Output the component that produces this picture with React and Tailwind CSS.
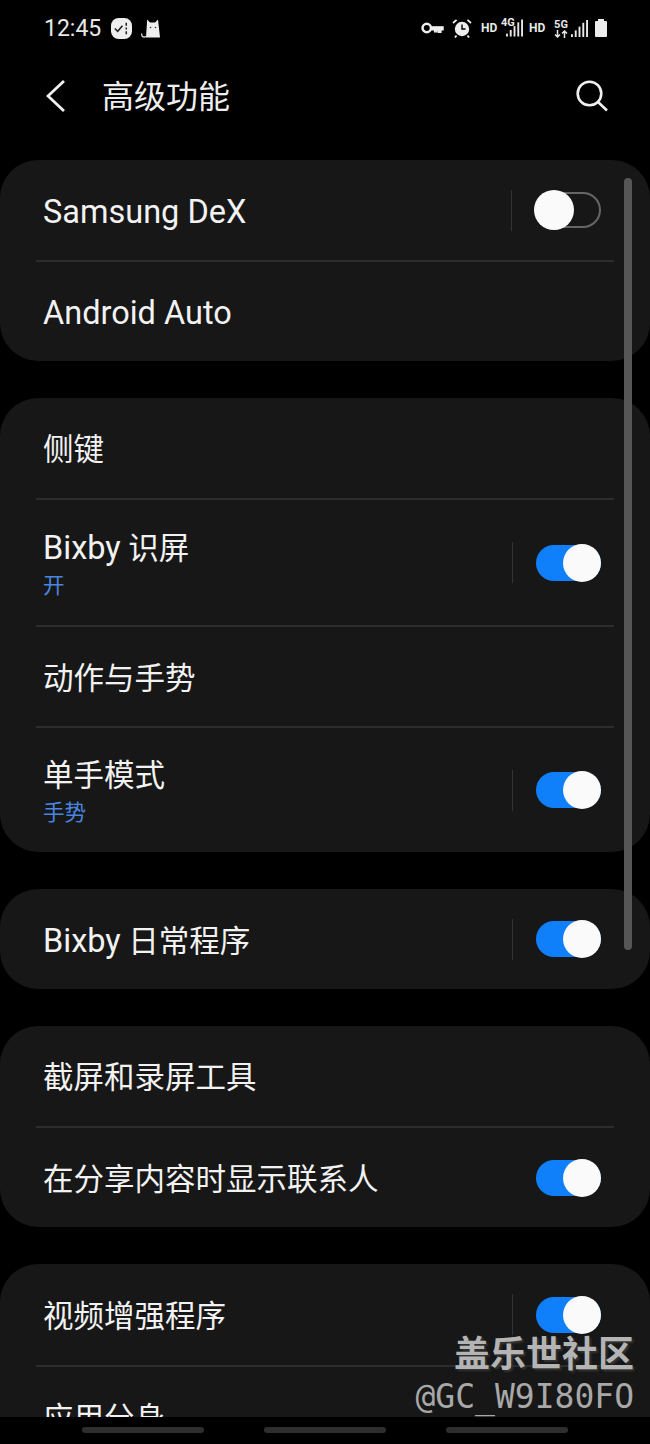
import React from 'react';

const cjk = "font-['Roboto','Noto_Sans_CJK_SC',sans-serif]";

const Signal = ({ className }) => (
  <svg viewBox="0 0 18 18" className={className} fill="#e8e8e8">
    <rect x="0" y="15" width="2" height="3" />
    <rect x="4" y="11" width="2" height="7" />
    <rect x="8" y="7" width="2" height="11" />
    <rect x="12" y="3" width="2" height="15" />
    <rect x="16" y="0" width="2" height="18" />
  </svg>
);

const StatusIcons = () => (
  <div className="flex items-center text-[#e8e8e8]">
    {/* key */}
    <svg viewBox="0 0 24 14" className="w-[23px] h-[14px]" fill="none" stroke="#eee">
      <circle cx="6" cy="7" r="4.4" strokeWidth="2.6" />
      <path d="M10.5 5.8H23v3h-2.2v2.8h-2.6V8.8h-1.6v2.2h-2.4V8.8h-3.6" strokeWidth="1.4" fill="#eee" />
    </svg>
    {/* alarm */}
    <svg viewBox="0 0 20 20" className="w-[20px] h-[20px] ml-[8px]">
      <circle cx="10" cy="11" r="7.2" fill="#eee" />
      <path d="M10 6.5V11h3.5" stroke="#000" strokeWidth="1.4" fill="none" />
      <path d="M1 5l3.6-3.2M19 5l-3.6-3.2M4.5 17.5L3 19.5M15.5 17.5L17 19.5" stroke="#eee" strokeWidth="1.8" />
    </svg>
    <span className="ml-[9px] w-[16px] text-[12px] font-bold leading-none font-['Roboto',sans-serif]">HD</span>
    <div className="relative ml-[4px] w-[22px] h-[18px]">
      <span className="absolute left-0 top-[-2px] text-[11px] font-bold leading-none font-['Roboto',sans-serif]">4G</span>
      <Signal className="absolute right-0 top-0 w-[17px] h-[18px]" />
    </div>
    <span className="ml-[6px] w-[16px] text-[12px] font-bold leading-none font-['Roboto',sans-serif]">HD</span>
    <div className="ml-[9px] flex flex-col items-center w-[14px]">
      <span className="text-[11px] font-bold leading-[11px] font-['Roboto',sans-serif]">5G</span>
      <svg viewBox="0 0 14 8" className="w-[14px] h-[8px]" fill="none" stroke="#e8e8e8" strokeWidth="1.5">
        <path d="M3.5 0v7M1 4.5l2.5 2.5L6 4.5M10.5 8V1M8 3.5L10.5 1 13 3.5" />
      </svg>
    </div>
    <Signal className="ml-[3px] w-[17px] h-[17px]" />
    <div className="ml-[7px] flex flex-col items-center">
      <div className="w-[6px] h-[2px] bg-[#eee]" />
      <div className="w-[12px] h-[16px] bg-[#eee] rounded-[1px]" />
    </div>
  </div>
);

const Toggle = ({ on, divider = true }) => (
  <div className="flex items-center shrink-0">
    {divider && <div className="w-px h-[41px] bg-[#333] mr-[23px]" />}
    {on ? (
      <div className="relative w-[65px] h-[36px] rounded-full bg-[#0f80fa]">
        <div className="absolute right-0 top-[-1px] w-[38px] h-[38px] rounded-full bg-[#fafafa]" />
      </div>
    ) : (
      <div className="relative w-[66px] h-[36px] rounded-full border-2 border-[#666]">
        <div className="absolute left-[-3px] top-[-4px] w-[40px] h-[40px] rounded-full bg-[#fafafa]" />
      </div>
    )}
  </div>
);

const Row = ({ title, sub, toggle, divider, last, className }) => (
  <div className={`mx-[36px] pl-[7px] pr-[13px] flex items-center justify-between ${last ? '' : 'border-b-2 border-[#2d2d2d]'} ${className}`}>
    <div className={sub ? 'pt-[2px]' : 'pt-[4px]'}>
      <div className="text-[30.5px] leading-[38px] text-[#f2f2f2]">{title}</div>
      {sub && <div className="text-[21.5px] leading-[26px] text-[#4a86e0] mt-[5px]">{sub}</div>}
    </div>
    {toggle !== undefined && <Toggle on={toggle} divider={divider} />}
  </div>
);

const Latin = ({ children }) => <span className="text-[32.5px]">{children}</span>;

const Card = ({ children }) => (
  <div className="bg-[#171717] rounded-[38px]">{children}</div>
);

export default function App() {
  return (
    <div className={`relative w-[650px] h-[1444px] bg-black overflow-hidden ${cjk}`}>
      {/* status bar */}
      <div className="h-[56px] pl-[44px] pr-[43px] flex items-center justify-between">
        <div className="flex items-center">
          <span className="text-[23px] text-[#e8e8e8] leading-none">12:45</span>
          <svg viewBox="0 0 22 22" className="w-[21px] h-[21px] ml-[10px]">
            <rect x="0" y="0" width="22" height="22" rx="8" fill="#eee" />
            <path d="M4 11l3 3 5-6" stroke="#222" strokeWidth="1.6" fill="none" />
            <path d="M16 5v3M16 10v2M16 14v3" stroke="#222" strokeWidth="1.6" />
          </svg>
          <svg viewBox="0 0 20 20" className="w-[20px] h-[20px] ml-[9px]">
            <path d="M5 19.5L6.2 1.5 9 4.5h5L17 1.5 19 19.5z" fill="#eee" />
            <path d="M5 18.5c-3 1.5-5-.5-4-3" stroke="#eee" strokeWidth="1.2" fill="none" />
            <circle cx="9.5" cy="9.5" r=".8" fill="#333" />
            <circle cx="14.5" cy="9.5" r=".8" fill="#333" />
          </svg>
        </div>
        <StatusIcons />
      </div>

      {/* header */}
      <div className="h-[104px] pb-[25px] pl-[46px] pr-[42px] flex items-center justify-between">
        <div className="flex items-center">
          <svg viewBox="0 0 20 34" className="w-[20px] h-[34px]" fill="none" stroke="#f0f0f0" strokeWidth="2.8">
            <path d="M18 2L2 17l16 15" />
          </svg>
          <span className="ml-[36px] mt-[2px] text-[32px] leading-none text-[#eee]">高级功能</span>
        </div>
        <svg viewBox="0 0 32 32" className="w-[32px] h-[32px]" fill="none" stroke="#f0f0f0" strokeWidth="2.6">
          <circle cx="13.5" cy="13.5" r="11.8" />
          <path d="M22 22l9 8.5" />
        </svg>
      </div>

      {/* settings list */}
      <div className="h-[1257px] overflow-hidden flex flex-col gap-[37px]">
        <Card>
          <Row title={<Latin>Samsung DeX</Latin>} toggle={false} className="h-[102px]" />
          <Row title={<Latin>Android Auto</Latin>} last className="h-[99px]" />
        </Card>
        <Card>
          <Row title="侧键" className="h-[102px]" />
          <Row title={<><Latin>Bixby</Latin> 识屏</>} sub="开" toggle={true} className="h-[127px]" />
          <Row title="动作与手势" className="h-[101px]" />
          <Row title="单手模式" sub="手势" toggle={true} last className="h-[124px]" />
        </Card>
        <Card>
          <Row title={<><Latin>Bixby</Latin> 日常程序</>} toggle={true} last className="h-[100px]" />
        </Card>
        <Card>
          <Row title="截屏和录屏工具" className="h-[102px]" />
          <Row title="在分享内容时显示联系人" toggle={true} divider={false} last className="h-[99px]" />
        </Card>
        <Card>
          <Row title="视频增强程序" toggle={true} className="h-[103px]" />
          <Row title="应用分身" last className="h-[100px]" />
        </Card>
      </div>

      {/* scrollbar */}
      <div className="absolute left-[624px] top-[178px] w-[8px] h-[772px] rounded-full bg-[#565656]" />

      {/* nav handles */}
      <div className="mt-[10px] flex justify-center gap-[60px]">
        <div className="w-[122px] h-[6px] rounded-full bg-[#2e2e2e]" />
        <div className="w-[122px] h-[6px] rounded-full bg-[#2e2e2e]" />
        <div className="w-[122px] h-[6px] rounded-full bg-[#2e2e2e]" />
      </div>

      {/* watermark */}
      <div className="absolute right-[16px] top-[1334px] flex flex-col items-end">
        <div className="text-[36px] leading-[42px] font-bold text-[#b4b4b4] [text-shadow:2px_2px_2px_#333]">盖乐世社区</div>
        <div className="mt-[2px] text-[33px] leading-[38px] text-[#a8a8a8] font-['DejaVu_Sans_Mono',monospace]">@GC_W9I80FO</div>
      </div>
    </div>
  );
}
